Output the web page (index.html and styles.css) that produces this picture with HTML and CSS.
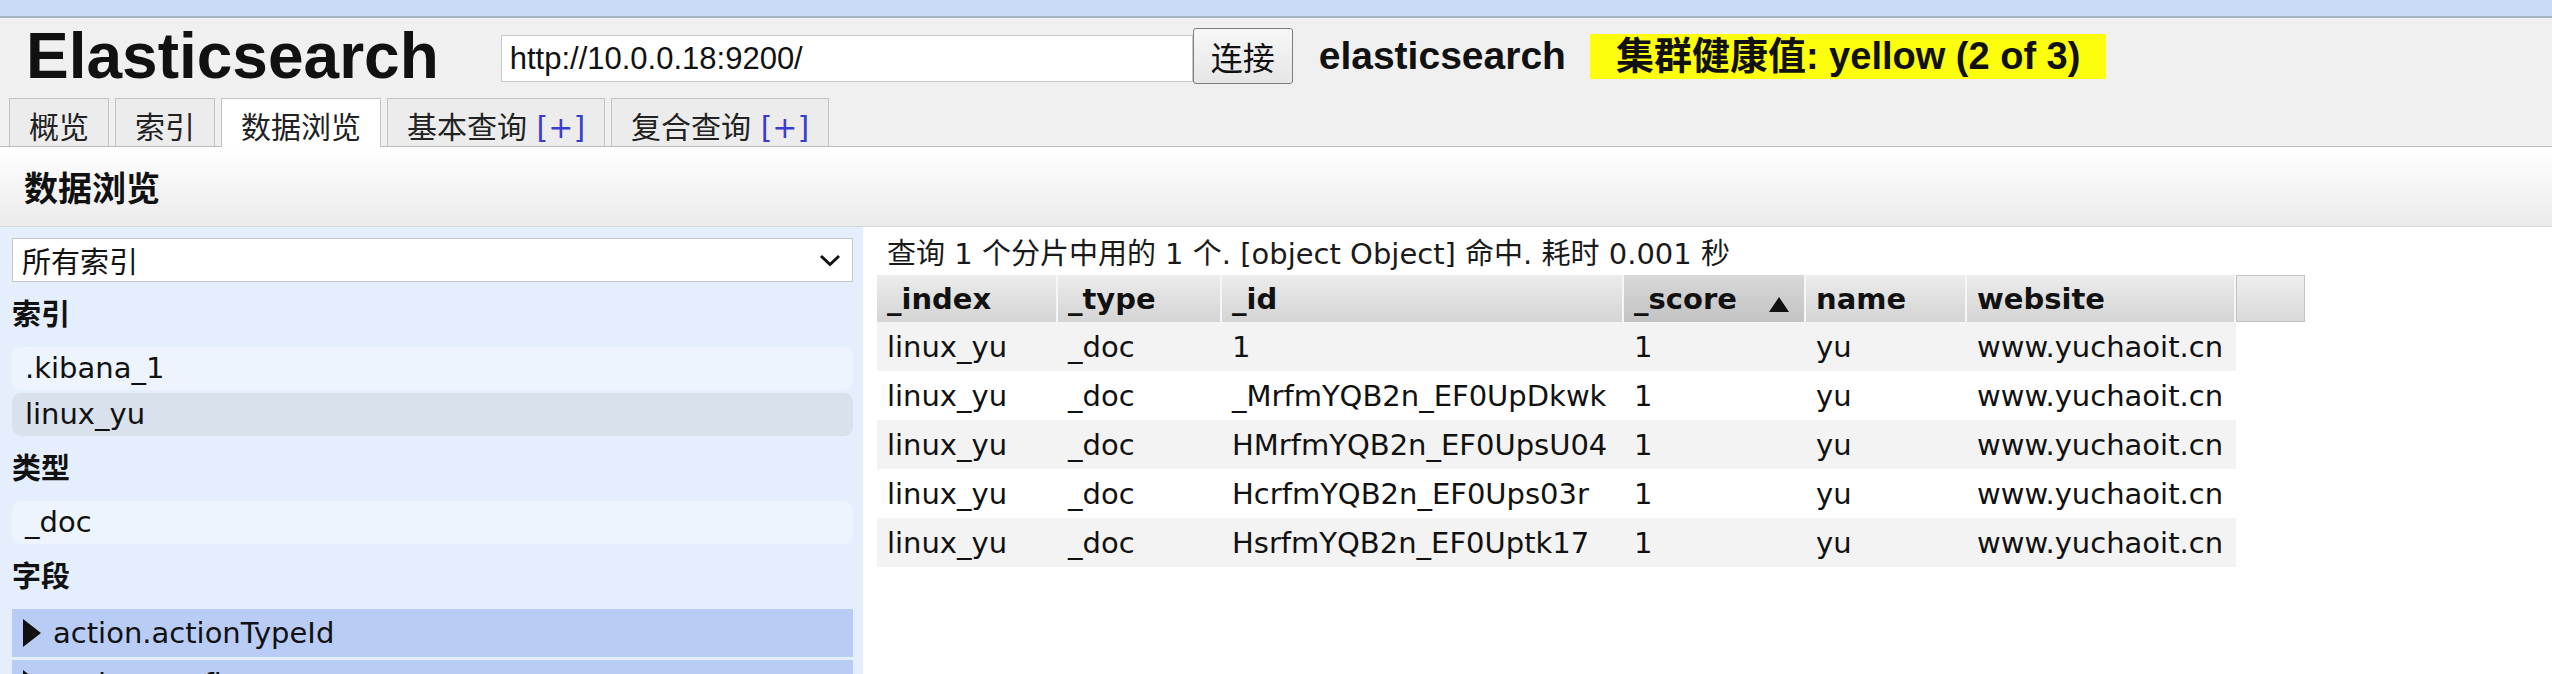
FILE: index.html
```html
<!DOCTYPE html>
<html lang="zh-CN">

<head>
    <meta charset="UTF-8">
    <meta name="viewport" content="width=device-width, initial-scale=1.0">
    <title>Elasticsearch</title>
    <link rel="stylesheet" href="styles.css">
</head>

<body>
    <div class="topbar"></div>

    <header class="header">
        <div class="header-main">
            <h1 class="logo">Elasticsearch</h1>
            <input type="text" class="url" value="http://10.0.0.18:9200/">
            <button class="connect">连接</button>
            <span class="cluster-name">elasticsearch</span>
            <span class="health">集群健康值: yellow (2 of 3)</span>
        </div>
        <ul class="tabs">
            <li>概览</li>
            <li>索引</li>
            <li class="active">数据浏览</li>
            <li>基本查询 <span class="plus">[+]</span></li>
            <li>复合查询 <span class="plus">[+]</span></li>
        </ul>
    </header>

    <div class="page-title">数据浏览</div>

    <div class="browser">
        <aside class="sidebar">
            <div class="select">
                <span>所有索引</span>
                <svg class="chevron" width="22" height="13" viewBox="0 0 22 13">
                    <path d="M2 2 L11 10.5 L20 2" fill="none" stroke="#111" stroke-width="3" />
                </svg>
            </div>

            <h3>索引</h3>
            <ul class="side-list">
                <li>.kibana_1</li>
                <li class="selected">linux_yu</li>
            </ul>

            <h3>类型</h3>
            <ul class="side-list">
                <li>_doc</li>
            </ul>

            <h3>字段</h3>
            <ul class="fields">
                <li><span class="arrow"></span>action.actionTypeId</li>
                <li><span class="arrow"></span>action.config</li>
            </ul>
        </aside>

        <main class="results">
            <p class="summary">查询 1 个分片中用的 1 个. [object Object] 命中. 耗时 0.001 秒</p>
            <table class="results-table">
                <thead>
                    <tr>
                        <th class="c-index">_index</th>
                        <th class="c-type">_type</th>
                        <th class="c-id">_id</th>
                        <th class="c-score sorted">_score <span class="sort-arrow"></span></th>
                        <th class="c-name">name</th>
                        <th class="c-site">website</th>
                        <th class="c-filler"></th>
                    </tr>
                </thead>
                <tbody>
                    <tr>
                        <td>linux_yu</td><td>_doc</td><td>1</td><td>1</td><td>yu</td><td>www.yuchaoit.cn</td>
                    </tr>
                    <tr>
                        <td>linux_yu</td><td>_doc</td><td>_MrfmYQB2n_EF0UpDkwk</td><td>1</td><td>yu</td><td>www.yuchaoit.cn</td>
                    </tr>
                    <tr>
                        <td>linux_yu</td><td>_doc</td><td>HMrfmYQB2n_EF0UpsU04</td><td>1</td><td>yu</td><td>www.yuchaoit.cn</td>
                    </tr>
                    <tr>
                        <td>linux_yu</td><td>_doc</td><td>HcrfmYQB2n_EF0Ups03r</td><td>1</td><td>yu</td><td>www.yuchaoit.cn</td>
                    </tr>
                    <tr>
                        <td>linux_yu</td><td>_doc</td><td>HsrfmYQB2n_EF0Uptk17</td><td>1</td><td>yu</td><td>www.yuchaoit.cn</td>
                    </tr>
                </tbody>
            </table>
        </main>
    </div>
</body>

</html>
```

FILE: styles.css
```css
html,
body {
    height: 100%;
}

body {
    margin: 0;
    overflow: hidden;
    background: #fff;
    color: #111;
    font-family: "DejaVu Sans", "Noto Sans CJK SC", sans-serif;
    font-size: 29px;
}

.topbar {
    height: 16px;
    background: #c9dbf5;
    border-bottom: 2px solid #a9b5c5;
}

/* header */
.header {
    background: #f0f0f0;
}

.header-main {
    display: flex;
    align-items: center;
    box-sizing: border-box;
    height: 80px;
    padding: 0 0 4px 26px;
}

.logo {
    margin: 0;
    font-family: "Liberation Sans", "Noto Sans CJK SC", sans-serif;
    font-size: 64px;
    font-weight: bold;
    line-height: 1;
    color: #111;
}

.url {
    box-sizing: border-box;
    width: 692px;
    height: 47px;
    margin: 5px 0 0 62px;
    padding: 0 8px;
    border: 1px solid #c9c9c9;
    background: #fff;
    font-family: "Liberation Sans", sans-serif;
    font-size: 31px;
    color: #111;
    outline: none;
}

.connect {
    width: 100px;
    height: 56px;
    padding: 0;
    border: 1px solid #7c7c7c;
    border-radius: 3px;
    background: linear-gradient(#f7f7f7, #e6e6e6);
    font-family: "Noto Sans CJK SC", sans-serif;
    font-size: 32px;
    color: #111;
}

.cluster-name {
    margin-left: 26px;
    font-family: "Liberation Sans", sans-serif;
    font-size: 39px;
    font-weight: bold;
}

.health {
    margin-left: 24px;
    height: 45px;
    padding: 0 26px;
    line-height: 45px;
    background: #fdfd0e;
    font-family: "Liberation Sans", "Noto Sans CJK SC", sans-serif;
    font-size: 38px;
    font-weight: bold;
}

/* tabs */
.tabs {
    display: flex;
    align-items: flex-end;
    gap: 6px;
    margin: 0;
    padding: 0 0 0 9px;
    list-style: none;
    border-bottom: 1px solid #bdbdbd;
}

.tabs li {
    height: 36px;
    padding: 11px 19px 0;
    line-height: 36px;
    border: 1px solid #c3c3c3;
    border-bottom: none;
    background: #ececec;
    font-size: 30px;
    color: #222;
    white-space: nowrap;
}

.tabs li.active {
    height: 37px;
    margin-bottom: -1px;
    background: #fff;
}

.plus {
    color: #3b3bd0;
}

.page-title {
    height: 79px;
    padding-left: 24px;
    line-height: 79px;
    background: linear-gradient(#fff, #ebebeb);
    border-bottom: 1px solid #d6d6d6;
    font-family: "Noto Sans CJK SC", sans-serif;
    font-size: 34px;
    font-weight: bold;
}

/* body */
.browser {
    display: flex;
    height: 448px;
}

.sidebar {
    box-sizing: border-box;
    width: 863px;
    padding: 11px 10px 0 12px;
    background: #e4eefc;
}

.select {
    display: flex;
    align-items: center;
    justify-content: space-between;
    box-sizing: border-box;
    height: 44px;
    padding: 0 11px 0 9px;
    border: 1px solid #c6c6c6;
    background: #fff;
}

.sidebar h3 {
    margin: 11px 0 10px;
    line-height: 44px;
    font-size: 29px;
    font-weight: bold;
}

.side-list {
    display: flex;
    flex-direction: column;
    gap: 3px;
    margin: 0;
    padding: 0;
    list-style: none;
}

.side-list li {
    height: 43px;
    padding-left: 13px;
    line-height: 43px;
    border-radius: 9px;
    background: rgba(255, 255, 255, 0.35);
}

.side-list li.selected {
    background: #d9e1ec;
}

.fields {
    margin: 0;
    padding: 0;
    list-style: none;
}

.fields li {
    display: flex;
    align-items: center;
    height: 48px;
    margin-bottom: 3px;
    padding-left: 11px;
    background: #b8ccf5;
}

.arrow {
    width: 0;
    height: 0;
    margin-right: 12px;
    border-left: 18px solid #111;
    border-top: 14px solid transparent;
    border-bottom: 14px solid transparent;
}

.results {
    flex: 1;
    padding: 10px 0 0 14px;
}

.summary {
    margin: 0 0 4px;
    padding-left: 10px;
    line-height: 34px;
    color: #1a1a1a;
}

/* table */
.results-table {
    width: 1428px;
    table-layout: fixed;
    border-collapse: separate;
    border-spacing: 0;
}

.results-table th,
.results-table td {
    box-sizing: border-box;
    padding: 0 10px;
    text-align: left;
    white-space: nowrap;
}

.results-table th {
    height: 47px;
    border-right: 2px solid #f6f6f6;
    background: linear-gradient(#ececec, #d4d4d4);
    font-weight: bold;
}

.results-table th.sorted {
    background: linear-gradient(#d8d8d8, #c3c3c3);
}

.results-table th.c-filler {
    border: 1px solid #c3c3c3;
    background: linear-gradient(#eeeeee, #d9d9d9);
}

.c-index { width: 181px; }
.c-type { width: 164px; }
.c-id { width: 402px; }
.c-score { width: 182px; }
.c-name { width: 161px; }
.c-site { width: 269px; }
.c-filler { width: 69px; }

.sort-arrow {
    display: inline-block;
    margin-left: 22px;
    vertical-align: -3px;
    border-left: 10px solid transparent;
    border-right: 10px solid transparent;
    border-bottom: 15px solid #111;
}

.results-table td {
    height: 49px;
    background: #fff;
}

.results-table tbody tr:nth-child(odd) td {
    background: #f3f3f3;
}
```
